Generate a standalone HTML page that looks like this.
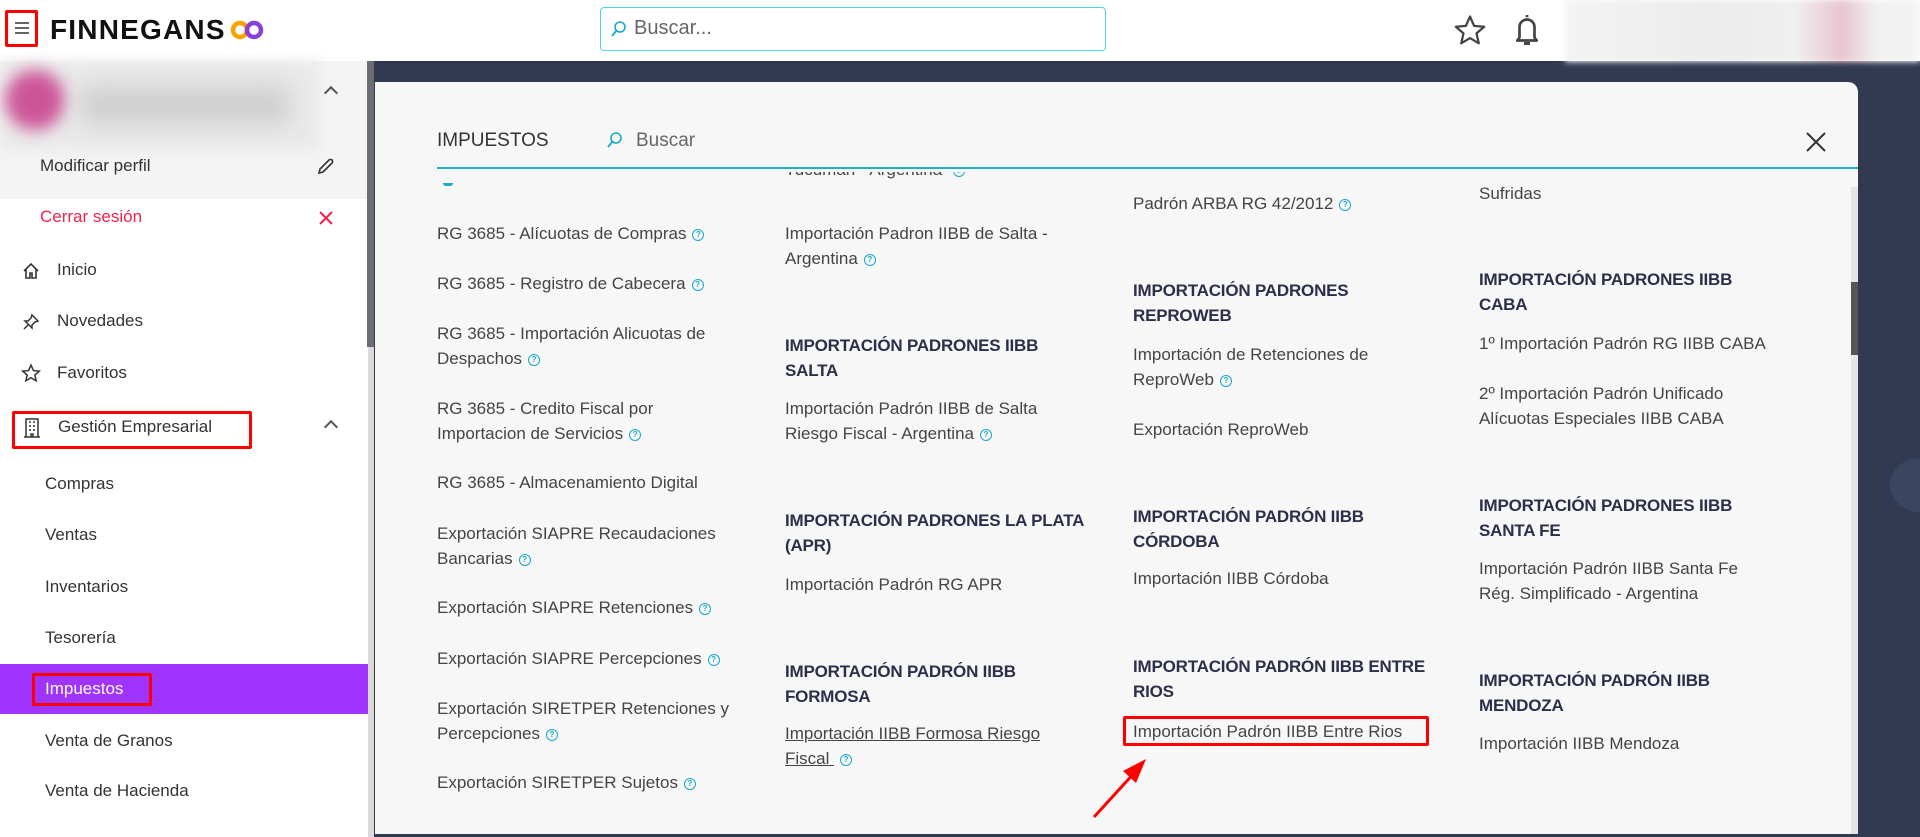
<!DOCTYPE html>
<html><head><meta charset="utf-8"><style>
*{margin:0;padding:0;box-sizing:border-box}
body{width:1920px;height:837px;overflow:hidden;background:#323a52;font-family:"Liberation Sans",sans-serif;position:relative}
.a{position:absolute;white-space:nowrap}
.t{font-size:17px;color:#444;line-height:25px}
.h{font-size:17px;color:#2b2f4a;font-weight:bold;line-height:25px;letter-spacing:-0.2px}
.q{display:inline-block;width:12px;height:12px;border:1.4px solid #19a9c9;border-radius:50%;font-size:8px;line-height:10px;text-align:center;color:#19a9c9;vertical-align:2px;margin-left:6px;font-weight:bold}
.s{font-size:17px;color:#333}
</style></head><body>
<!-- header -->
<div class="a" style="left:0;top:0;width:1920px;height:61px;background:#fff;box-shadow:0 1px 3px rgba(0,0,0,.1)"></div>
<div class="a" style="left:5px;top:10px;width:33px;height:37px;border:3px solid #f00;border-radius:2px"></div>
<div class="a" style="left:15px;top:22px;width:14px;height:1.5px;background:#666;box-shadow:0 5px 0 #666,0 10px 0 #666"></div>
<div class="a" style="left:50px;top:14px;font-size:28px;font-weight:bold;color:#111;letter-spacing:1.2px">FINNEGANS</div>
<svg class="a" style="left:230px;top:19px" width="34" height="22" viewBox="0 0 34 22"><circle cx="10" cy="11" r="7" fill="none" stroke="#f7a400" stroke-width="4.5"/><circle cx="24" cy="11" r="7" fill="none" stroke="#8b3fd9" stroke-width="4.5"/></svg>
<div class="a" style="left:600px;top:7px;width:506px;height:44px;border:1.5px solid #4dd6e8;border-radius:4px"></div>
<svg class="a" style="left:610px;top:20px" width="18" height="18" viewBox="0 0 18 18"><circle cx="10" cy="7" r="5" fill="none" stroke="#19a9c9" stroke-width="1.6"/><path d="M6.5 10.5L2 16" stroke="#19a9c9" stroke-width="1.8"/></svg>
<div class="a" style="left:634px;top:17px;font-size:20px;color:#666">Buscar...</div>
<svg class="a" style="left:1453px;top:13px" width="34" height="34" viewBox="0 0 24 24"><path d="M12 2.5l2.9 6.6 7.1.6-5.4 4.7 1.6 7-6.2-3.7-6.2 3.7 1.6-7L2 9.7l7.1-.6z" fill="none" stroke="#444" stroke-width="1.6" stroke-linejoin="round"/></svg>
<svg class="a" style="left:1512px;top:12px" width="30" height="36" viewBox="0 0 20 24"><path d="M10 2v1.5M5 17V10a5 5 0 0110 0v7l1.5 2h-13z" fill="none" stroke="#444" stroke-width="1.8" stroke-linejoin="round"/><path d="M8 21h4" stroke="#444" stroke-width="2"/></svg>
<div class="a" style="left:1565px;top:0;width:355px;height:62px;background:linear-gradient(90deg,#f3f3f3,#ececec 40%,#efefef 65%,#e8c4cf 78%,#f1f1f1 88%,#f3f3f3);filter:blur(3px)"></div>
<!-- sidebar -->
<div class="a" style="left:0;top:61px;width:368px;height:776px;background:#fff"></div>
<div class="a" style="left:0;top:61px;width:368px;height:138px;background:#f4f4f4"></div>
<div class="a" style="left:0;top:61px;width:320px;height:90px;background:#eaeaea;filter:blur(6px)"></div>
<div class="a" style="left:5px;top:70px;width:60px;height:60px;border-radius:50%;background:#cc5599;filter:blur(8px)"></div>
<div class="a" style="left:80px;top:85px;width:210px;height:40px;background:#cfcfcf;filter:blur(12px)"></div>
<div class="a" style="left:326px;top:88px;width:10px;height:10px;border-left:2px solid #555;border-top:2px solid #555;transform:rotate(45deg)"></div>
<div class="a s" style="left:40px;top:156px">Modificar perfil</div>
<svg class="a" style="left:316px;top:156px" width="18" height="20" viewBox="0 0 18 20"><path d="M3 17l1-4 9-9a2 2 0 013 3l-9 9z" fill="none" stroke="#333" stroke-width="1.6"/></svg>
<div class="a s" style="left:40px;top:207px;color:#f0244d">Cerrar sesión</div>
<svg class="a" style="left:318px;top:210px" width="16" height="16"><path d="M2 2l12 12M14 2L2 14" stroke="#f0244d" stroke-width="2"/></svg>
<svg class="a" style="left:22px;top:262px" width="18" height="18" viewBox="0 0 18 18"><path d="M2 9l7-7 7 7M4 7v9h4v-5h2v5h4V7" fill="none" stroke="#333" stroke-width="1.6"/></svg>
<div class="a s" style="left:57px;top:260px">Inicio</div>
<svg class="a" style="left:22px;top:313px" width="18" height="18" viewBox="0 0 18 18"><path d="M10 2l6 6-3 1-3 3 0 3-7-7h3l3-3zM6 12l-4 4" fill="none" stroke="#333" stroke-width="1.5"/></svg>
<div class="a s" style="left:57px;top:311px">Novedades</div>
<svg class="a" style="left:21px;top:363px" width="20" height="20" viewBox="0 0 24 24"><path d="M12 2.5l2.9 6.6 7.1.6-5.4 4.7 1.6 7-6.2-3.7-6.2 3.7 1.6-7L2 9.7l7.1-.6z" fill="none" stroke="#333" stroke-width="1.8"/></svg>
<div class="a s" style="left:57px;top:363px">Favoritos</div>
<div class="a" style="left:12px;top:411px;width:240px;height:38px;border:3px solid #f00;border-radius:2px"></div>
<svg class="a" style="left:23px;top:417px" width="18" height="22" viewBox="0 0 18 22"><path d="M3 2h12v18H3zM1 20h16M6 5h2M10 5h2M6 9h2M10 9h2M6 13h2M10 13h2M8 20v-3h2v3" fill="none" stroke="#333" stroke-width="1.5"/></svg>
<div class="a s" style="left:58px;top:417px">Gestión Empresarial</div>
<div class="a" style="left:326px;top:422px;width:10px;height:10px;border-left:2px solid #555;border-top:2px solid #555;transform:rotate(45deg)"></div>
<div class="a s" style="left:45px;top:474px">Compras</div>
<div class="a s" style="left:45px;top:525px">Ventas</div>
<div class="a s" style="left:45px;top:577px">Inventarios</div>
<div class="a s" style="left:45px;top:628px">Tesorería</div>
<div class="a" style="left:0;top:664px;width:368px;height:50px;background:#a033fc"></div>
<div class="a" style="left:32px;top:673px;width:120px;height:33px;border:3px solid #f00;border-radius:2px"></div>
<div class="a s" style="left:45px;top:679px;color:#fff">Impuestos</div>
<div class="a s" style="left:45px;top:731px">Venta de Granos</div>
<div class="a s" style="left:45px;top:781px">Venta de Hacienda</div>
<div class="a" style="left:367px;top:61px;width:7px;height:286px;background:#6b6e76"></div>
<div class="a" style="left:368px;top:347px;width:6px;height:490px;background:#dadada"></div>
<!-- modal -->
<div class="a" style="left:375px;top:82px;width:1483px;height:752px;background:#f7f7f7;border-radius:0 10px 0 0"></div>
<div class="a" style="left:437px;top:130px;font-size:19px;color:#333">IMPUESTOS</div>
<svg class="a" style="left:606px;top:131px" width="18" height="18" viewBox="0 0 18 18"><circle cx="10" cy="7" r="5" fill="none" stroke="#19a9c9" stroke-width="1.6"/><path d="M6.5 10.5L2 16" stroke="#19a9c9" stroke-width="1.8"/></svg>
<div class="a" style="left:636px;top:130px;font-size:19px;color:#666">Buscar</div>
<svg class="a" style="left:1806px;top:132px" width="20" height="20"><path d="M1 1l18 18M19 1L1 19" stroke="#333" stroke-width="2"/></svg>
<div class="a" style="left:437px;top:167px;width:1421px;height:2px;background:#27aac6"></div>
<div class="a" style="left:1851px;top:187px;width:7px;height:647px;background:#e6e6e6"></div>
<div class="a" style="left:1851px;top:282px;width:7px;height:73px;background:#555"></div>
<div class="a" style="left:375px;top:172px;width:1476px;height:20px;overflow:hidden">
<div class="a t" style="left:410px;top:-15px">Tucumán - Argentina <span class="q">?</span></div>
<div class="a" style="left:68px;top:11px;width:10px;height:3px;border-radius:0 0 5px 5px;background:#19a9c9"></div></div>
<!-- col1 -->
<div class="a t" style="left:437px;top:221px">RG 3685 - Alícuotas de Compras<span class="q">?</span></div>
<div class="a t" style="left:437px;top:271px">RG 3685 - Registro de Cabecera<span class="q">?</span></div>
<div class="a t" style="left:437px;top:321px">RG 3685 - Importación Alicuotas de<br>Despachos<span class="q">?</span></div>
<div class="a t" style="left:437px;top:396px">RG 3685 - Credito Fiscal por<br>Importacion de Servicios<span class="q">?</span></div>
<div class="a t" style="left:437px;top:470px">RG 3685 - Almacenamiento Digital</div>
<div class="a t" style="left:437px;top:521px">Exportación SIAPRE Recaudaciones<br>Bancarias<span class="q">?</span></div>
<div class="a t" style="left:437px;top:595px">Exportación SIAPRE Retenciones<span class="q">?</span></div>
<div class="a t" style="left:437px;top:646px">Exportación SIAPRE Percepciones<span class="q">?</span></div>
<div class="a t" style="left:437px;top:696px">Exportación SIRETPER Retenciones y<br>Percepciones<span class="q">?</span></div>
<div class="a t" style="left:437px;top:770px">Exportación SIRETPER Sujetos<span class="q">?</span></div>
<!-- col2 -->
<div class="a t" style="left:785px;top:221px">Importación Padron IIBB de Salta -<br>Argentina<span class="q">?</span></div>
<div class="a h" style="left:785px;top:333px">IMPORTACIÓN PADRONES IIBB<br>SALTA</div>
<div class="a t" style="left:785px;top:396px">Importación Padrón IIBB de Salta<br>Riesgo Fiscal - Argentina<span class="q">?</span></div>
<div class="a h" style="left:785px;top:508px">IMPORTACIÓN PADRONES LA PLATA<br>(APR)</div>
<div class="a t" style="left:785px;top:572px">Importación Padrón RG APR</div>
<div class="a h" style="left:785px;top:659px">IMPORTACIÓN PADRÓN IIBB<br>FORMOSA</div>
<div class="a t" style="left:785px;top:721px;text-decoration:underline">Importación IIBB Formosa Riesgo<br>Fiscal <span class="q" style="text-decoration:none">?</span></div>
<!-- col3 -->
<div class="a t" style="left:1133px;top:191px">Padrón ARBA RG 42/2012<span class="q">?</span></div>
<div class="a h" style="left:1133px;top:278px">IMPORTACIÓN PADRONES<br>REPROWEB</div>
<div class="a t" style="left:1133px;top:342px">Importación de Retenciones de<br>ReproWeb<span class="q">?</span></div>
<div class="a t" style="left:1133px;top:417px">Exportación ReproWeb</div>
<div class="a h" style="left:1133px;top:504px">IMPORTACIÓN PADRÓN IIBB<br>CÓRDOBA</div>
<div class="a t" style="left:1133px;top:566px">Importación IIBB Córdoba</div>
<div class="a h" style="left:1133px;top:654px">IMPORTACIÓN PADRÓN IIBB ENTRE<br>RIOS</div>
<div class="a t" style="left:1133px;top:719px">Importación Padrón IIBB Entre Rios</div>
<div class="a" style="left:1123px;top:716px;width:306px;height:30px;border:3px solid #f00;border-radius:2px"></div>
<svg class="a" style="left:1090px;top:755px" width="60" height="66"><path d="M4 62L46 16" stroke="#f00" stroke-width="3"/><path d="M56 4L33 16 46 28z" fill="#f00"/></svg>
<!-- col4 -->
<div class="a t" style="left:1479px;top:181px">Sufridas</div>
<div class="a h" style="left:1479px;top:267px">IMPORTACIÓN PADRONES IIBB<br>CABA</div>
<div class="a t" style="left:1479px;top:331px">1º Importación Padrón RG IIBB CABA</div>
<div class="a t" style="left:1479px;top:381px">2º Importación Padrón Unificado<br>Alícuotas Especiales IIBB CABA</div>
<div class="a h" style="left:1479px;top:493px">IMPORTACIÓN PADRONES IIBB<br>SANTA FE</div>
<div class="a t" style="left:1479px;top:556px">Importación Padrón IIBB Santa Fe<br>Rég. Simplificado - Argentina</div>
<div class="a h" style="left:1479px;top:668px">IMPORTACIÓN PADRÓN IIBB<br>MENDOZA</div>
<div class="a t" style="left:1479px;top:731px">Importación IIBB Mendoza</div>
<div class="a" style="left:1890px;top:458px;width:60px;height:54px;border-radius:50%;background:#3a4560"></div>
</body></html>
